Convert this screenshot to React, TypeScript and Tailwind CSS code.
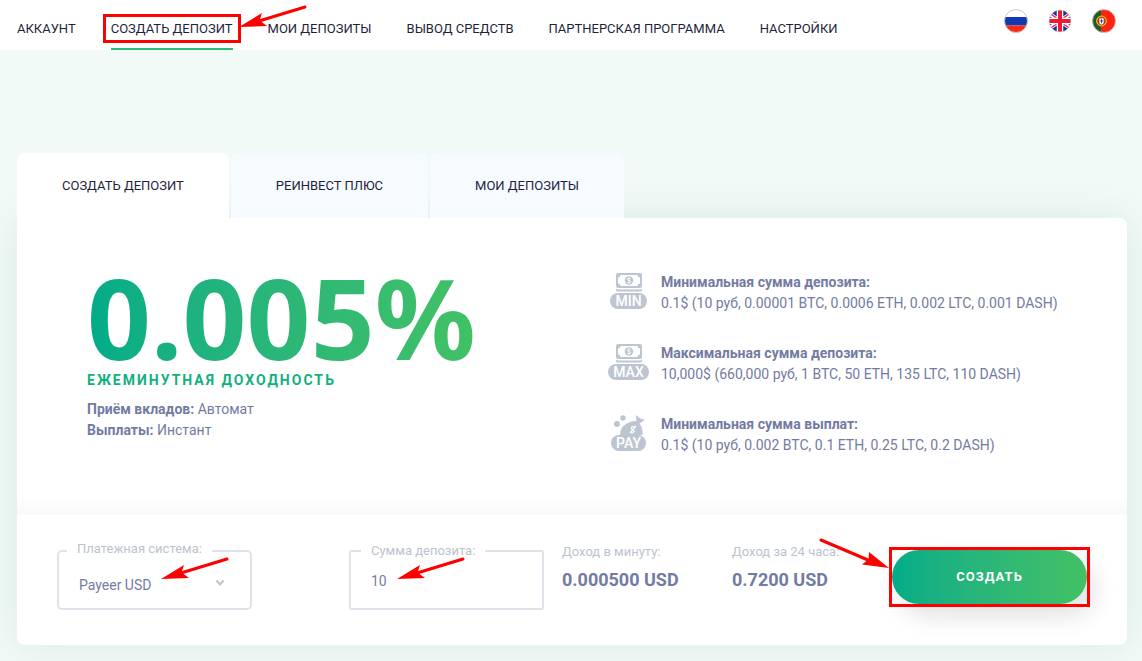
import React, { useState } from 'react';

const NAV_LINKS = [
  { name: 'АККАУНТ', href: '#account' },
  { name: 'СОЗДАТЬ ДЕПОЗИТ', href: '#create', active: true },
  { name: 'МОИ ДЕПОЗИТЫ', href: '#deposits' },
  { name: 'ВЫВОД СРЕДСТВ', href: '#withdraw' },
  { name: 'ПАРТНЕРСКАЯ ПРОГРАММА', href: '#partners' },
  { name: 'НАСТРОЙКИ', href: '#settings' },
];

const TABS = ['СОЗДАТЬ ДЕПОЗИТ', 'РЕИНВЕСТ ПЛЮС', 'МОИ ДЕПОЗИТЫ'];

const LIMITS = [
  { badge: 'MIN', title: 'Минимальная сумма депозита:', text: '0.1$ (10 руб, 0.00001 BTC, 0.0006 ETH, 0.002 LTC, 0.001 DASH)' },
  { badge: 'MAX', title: 'Максимальная сумма депозита:', text: '10,000$ (660,000 руб, 1 BTC, 50 ETH, 135 LTC, 110 DASH)' },
  { badge: 'PAY', title: 'Минимальная сумма выплат:', text: '0.1$ (10 руб, 0.002 BTC, 0.1 ETH, 0.25 LTC, 0.2 DASH)' },
];

interface ArrowProps {
  className: string;
}

// Pointer with the tip at the lower left
const ArrowLeft: React.FC<ArrowProps> = ({ className }) => (
  <svg className={`absolute z-10 pointer-events-none ${className}`} width="68" height="24" viewBox="0 0 68 24" aria-hidden="true">
    <path d="M66 2L20 16" stroke="#f00" strokeWidth="3" strokeLinecap="round" />
    <path d="M0 22L23 8L20.500 15.500L28 21Z" fill="#f00" />
  </svg>
);

// Pointer with the tip at the lower right
const ArrowRight: React.FC<ArrowProps> = ({ className }) => (
  <svg className={`absolute z-10 pointer-events-none ${className}`} width="70" height="30" viewBox="0 0 70 30" aria-hidden="true">
    <path d="M2 2L49 22" stroke="#f00" strokeWidth="3" strokeLinecap="round" />
    <path d="M70 30L50 14L49.500 21.500L43 26.500Z" fill="#f00" />
  </svg>
);

const FlagRu = () => (
  <svg className="w-6 h-6" viewBox="0 0 24 24" aria-hidden="true">
    <clipPath id="ru"><circle cx="12" cy="12" r="11.500" /></clipPath>
    <g clipPath="url(#ru)">
      <path fill="#fff" d="M0 0h24v8H0z" />
      <path fill="#1239b5" d="M0 8h24v8.500H0z" />
      <path fill="#fb2a14" d="M0 16.500h24V24H0z" />
    </g>
    <circle cx="12" cy="12" r="11.500" fill="none" stroke="#c9c9cc" />
  </svg>
);

const FlagGb = () => (
  <svg className="w-6 h-6" viewBox="0 0 24 24" aria-hidden="true">
    <clipPath id="gb"><circle cx="12" cy="12" r="11" /></clipPath>
    <g clipPath="url(#gb)">
      <path fill="#17339a" d="M0 0h24v24H0z" />
      <path stroke="#fff" strokeWidth="4" d="M-1 3L25 21M-1 21L25 3" />
      <path stroke="#ee1a35" strokeWidth="1.300" d="M0 3L10 10M14 14L24 21M0 21L10 14M14 10L24 3" />
      <path stroke="#fff" strokeWidth="6.500" d="M12 0v24M0 12h24" />
      <path stroke="#ee1a35" strokeWidth="4" d="M12 0v24M0 12h24" />
    </g>
    <circle cx="12" cy="12" r="11" fill="none" stroke="#ddd" strokeWidth=".6" />
  </svg>
);

const FlagPt = () => (
  <svg className="w-6 h-6" viewBox="0 0 24 24" aria-hidden="true">
    <clipPath id="pt"><circle cx="12" cy="12" r="11.500" /></clipPath>
    <g clipPath="url(#pt)">
      <path fill="#fb2412" d="M0 0h24v24H0z" />
      <path fill="#15602a" d="M0 0h9v24H0z" />
      <circle cx="9.500" cy="12" r="4.800" fill="#b53a12" stroke="#e3bd1c" strokeWidth="1.300" />
      <path fill="#fff" stroke="#e02020" strokeWidth=".7" d="M7 9h5v4.500q0 2-2.500 2.500Q7 15.500 7 13.500z" />
      <path stroke="#2b49a5" strokeWidth="1" d="M9.500 10.200v4M8 12h3" />
    </g>
    <circle cx="12" cy="12" r="11.500" fill="none" stroke="#d6c9c4" strokeWidth=".8" />
  </svg>
);

const LANGUAGES = [
  { label: 'Русский', Flag: FlagRu },
  { label: 'English', Flag: FlagGb },
  { label: 'Português', Flag: FlagPt },
];

const MoneyIcon = () => (
  <svg width="26" height="20" viewBox="0 0 26 20" fill="#bcc5d1" aria-hidden="true">
    <path fillRule="evenodd" d="M2 0h22q2 0 2 2v11q0 2-2 2H2q-2 0-2-2V2Q0 0 2 0zM4.500 2Q4.500 4.200 2 4.500v6q2.500.3 2.500 2.500h17q0-2.200 2.500-2.500v-6Q21.500 4.200 21.500 2z" />
    <circle cx="13" cy="7.500" r="4.200" />
    <path d="M14.700 5.900q-.5-.8-1.700-.8-1.600 0-1.600 1.200 0 1 1.600 1.200 1.700.2 1.700 1.200T13 9.900q-1.300 0-1.700-.9M13 4.200v6.600" fill="none" stroke="#fff" strokeWidth=".8" />
    <path d="M0 15.500q.8 1 2 1h22q1.200 0 2-1v1.500q0 1.500-2 1.500H2q-2 0-2-1.500z" />
  </svg>
);

const PayIcon = () => (
  <svg width="34" height="20" viewBox="0 0 34 20" fill="#bcc5d1" aria-hidden="true">
    <circle cx="11" cy="3" r="2.700" />
    <circle cx="5" cy="9" r="3" />
    <path d="M8 20q0-8 7-11.500 5-3 9.500-2.300L24 0l4.200 3.500 4.800 1.300-5.500 4q3.500 4 3 11.200z" />
    <path d="M23 12.500q-2-1.500-3.200-.3-1 1.300.9 2.600 1.900 1.400.7 2.600-1.300 1.200-3.200-.4M24 11l-6 7" fill="none" stroke="#fff" strokeWidth="1.200" />
  </svg>
);

const Header: React.FC = () => (
  <header className="bg-white h-[50px] pl-[17px] pr-[26px] flex justify-between">
    <nav className="flex gap-[35px]">
      {NAV_LINKS.map((link) => (
        <a
          key={link.name}
          href={link.href}
          className={`relative h-[50px] pt-[19px] text-[13px] leading-5 whitespace-nowrap border-b-2 ${link.active ? 'border-[#2ebd77]' : 'border-transparent'}`}
        >
          {link.name}
          {link.active && (
            <>
              <span className="absolute -inset-x-2 top-[14px] h-[29px] border-3 border-[#f00]" />
              <ArrowLeft className="left-full ml-1.5 top-[5px]" />
            </>
          )}
        </a>
      ))}
    </nav>
    <div className="flex gap-5 pt-[9px]">
      {LANGUAGES.map(({ label, Flag }) => (
        <button key={label} type="button" aria-label={label} className="w-6 h-6">
          <Flag />
        </button>
      ))}
    </div>
  </header>
);

const PlanInfo: React.FC = () => (
  <div className="grid grid-cols-2 pl-[70px] h-[297px] rounded-tr-lg bg-linear-to-b from-white from-94% to-[#f9f9f9]">
    <div className="pt-[50px]">
      <div className="w-fit font-['Noto_Sans','Open_Sans',sans-serif] font-bold text-[112px] leading-[98px] bg-linear-to-r from-[#00ac88] to-[#42c164] bg-clip-text text-transparent">
        0.005%
      </div>
      <div className="mt-1 text-[14px] leading-5 font-bold tracking-[2px] text-[#12b080]">ЕЖЕМИНУТНАЯ ДОХОДНОСТЬ</div>
      <div className="mt-[9px] text-[14px] leading-[21px]">
        <p><b className="font-bold">Приём вкладов:</b> Автомат</p>
        <p><b className="font-bold">Выплаты:</b> Инстант</p>
      </div>
    </div>
    <ul className="pt-[54px] flex flex-col gap-[29px]">
      {LIMITS.map((limit) => (
        <li key={limit.badge} className="flex gap-[11px]">
          <div className="w-[43px] pt-px flex flex-col items-center">
            {limit.badge === 'PAY' ? <PayIcon /> : <MoneyIcon />}
            <span className="px-[5px] h-4 rounded-full bg-[#bcc5d1] text-white text-[14px] leading-4 font-medium">{limit.badge}</span>
          </div>
          <div className="text-[14px] leading-[21px] whitespace-nowrap">
            <p className="font-bold">{limit.title}</p>
            <p>{limit.text}</p>
          </div>
        </li>
      ))}
    </ul>
  </div>
);

const DepositForm: React.FC = () => {
  const [amount, setAmount] = useState('10');

  return (
    <form
      onSubmit={(e) => e.preventDefault()}
      className="grid grid-cols-[292fr_213fr_170fr_160fr_195fr] items-start h-[130px] pl-10 pr-10 pt-6"
    >
      <div className="relative w-[195px]">
        <fieldset className="h-[71px] border-2 border-[#dfe3e9] rounded-[5px] px-2">
          <legend className="px-2.5 pb-1 text-[13px] leading-5 text-[#bcc3ce]">
            <label htmlFor="system">Платежная система:</label>
          </legend>
          <select id="system" className="appearance-none w-full h-10 pl-3 pt-1 bg-transparent text-[14px] outline-none">
            <option>Payeer USD</option>
          </select>
        </fieldset>
        <svg className="absolute right-[27px] top-10 pointer-events-none" width="10" height="8" viewBox="0 0 10 8" fill="none" stroke="#bcc3ce" strokeWidth="2" aria-hidden="true">
          <path d="M1.500 1.500L5 5.500L8.500 1.500" />
        </svg>
        <ArrowLeft className="left-[104px] top-[18px]" />
      </div>

      <div className="relative w-[195px]">
        <fieldset className="mt-0.5 h-[69px] border-2 border-[#dfe3e9] rounded-[3px] px-2.5">
          <legend className="px-2.5 text-[13px] leading-5 text-[#bcc3ce]">
            <label htmlFor="amount">Сумма депозита:</label>
          </legend>
          <input
            id="amount"
            type="text"
            value={amount}
            onChange={(e) => setAmount(e.target.value)}
            className="w-full h-10 pl-2.5 bg-transparent text-[14px] outline-none"
          />
        </fieldset>
        <ArrowLeft className="left-12 top-[18px]" />
      </div>

      <div className="pt-[3px]">
        <p className="text-[13px] leading-5 text-[#bcc3ce]">Доход в минуту:</p>
        <p className="mt-1 text-[18px] leading-7 font-bold">0.000500 USD</p>
      </div>
      <div className="pt-[3px]">
        <p className="text-[13px] leading-5 text-[#bcc3ce]">Доход за 24 часа:</p>
        <p className="mt-1 text-[18px] leading-7 font-bold">0.7200 USD</p>
      </div>

      <div className="relative mt-[11px]">
        <button
          type="submit"
          className="w-full h-[54px] rounded-full bg-linear-to-r from-[#00ac88] to-[#42c164] text-white text-[13px] font-bold tracking-[1px] shadow-[8px_12px_24px_rgba(0,0,0,0.12)]"
        >
          СОЗДАТЬ
        </button>
        <span className="absolute -inset-[3px] border-3 border-[#f00] pointer-events-none" />
        <ArrowRight className="right-full mr-[3px] -top-3" />
      </div>
    </form>
  );
};

export default function App() {
  return (
    <div className="min-h-screen bg-[#f1faf7] font-[Roboto,sans-serif] text-[#1f1f3d] overflow-hidden">
      <Header />
      <main className="pl-[17px] pr-[15px] pt-[103px] pb-4">
        <div className="relative z-10 flex gap-0.5">
          {TABS.map((tab, i) => (
            <button
              key={tab}
              type="button"
              className={`h-[65px] px-[45px] rounded-t-lg text-[13px] whitespace-nowrap ${i === 0 ? 'bg-white' : 'bg-[#f6fbff]'}`}
            >
              {tab}
            </button>
          ))}
        </div>
        <section className="bg-white rounded-lg rounded-tl-none text-[#737ba3] shadow-[0_0_40px_rgba(60,120,110,0.12)]">
          <PlanInfo />
          <DepositForm />
        </section>
      </main>
    </div>
  );
}
